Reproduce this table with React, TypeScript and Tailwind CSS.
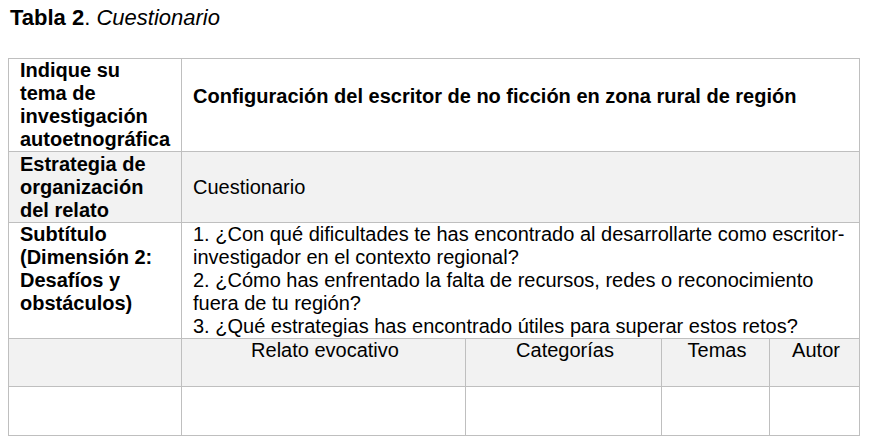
export default function App() {
  const cell = "border border-[#bfbfbf] pl-[11px] pr-2 py-0 align-middle";
  return (
    <main className="h-[440px] w-[869px] bg-white font-['Liberation_Sans',Arial,sans-serif] text-[20px] leading-[23px] text-black">
      <h1 className="pl-[10px] pt-[5px] text-[22px] leading-[25px]">
        <span className="font-bold">Tabla 2</span>. <span className="italic">Cuestionario</span>
      </h1>

      <table className="ml-[8px] mt-[28px] w-[851px] table-fixed border-collapse">
        <colgroup>
          <col className="w-[173px]" />
          <col className="w-[284px]" />
          <col className="w-[196px]" />
          <col className="w-[108px]" />
          <col className="w-[90px]" />
        </colgroup>
        <tbody>
          <tr className="h-[93px]">
            <td className={`${cell} font-bold`}>
              Indique su
              <br />
              tema de
              <br />
              investigación
              <br />
              autoetnográfica
            </td>
            <td colSpan={4} className={`${cell} pb-[18px] font-bold`}>
              Configuración del escritor de no ficción en zona rural de región
            </td>
          </tr>
          <tr className="h-[71px] bg-[#f2f2f2]">
            <td className={`${cell} font-bold`}>
              Estrategia de
              <br />
              organización
              <br />
              del relato
            </td>
            <td colSpan={4} className={cell}>
              Cuestionario
            </td>
          </tr>
          <tr className="h-[115px]">
            <td className={`${cell} align-top font-bold`}>
              Subtítulo
              <br />
              (Dimensión 2:
              <br />
              Desafíos y
              <br />
              obstáculos)
            </td>
            <td colSpan={4} className={`${cell} align-top`}>
              1. ¿Con qué dificultades te has encontrado al desarrollarte como escritor-
              <br />
              investigador en el contexto regional?
              <br />
              2. ¿Cómo has enfrentado la falta de recursos, redes o reconocimiento
              <br />
              fuera de tu región?
              <br />
              3. ¿Qué estrategias has encontrado útiles para superar estos retos?
            </td>
          </tr>
          <tr className="h-[48px] bg-[#f2f2f2]">
            <td className={cell}></td>
            <td className={`${cell} align-top text-center`}>Relato evocativo</td>
            <td className={`${cell} align-top text-center`}>Categorías</td>
            <td className={`${cell} align-top text-center`}>Temas</td>
            <td className={`${cell} align-top text-center`}>Autor</td>
          </tr>
          <tr className="h-[49px]">
            <td className={cell}></td>
            <td className={cell}></td>
            <td className={cell}></td>
            <td className={cell}></td>
            <td className={cell}></td>
          </tr>
        </tbody>
      </table>
    </main>
  );
}
